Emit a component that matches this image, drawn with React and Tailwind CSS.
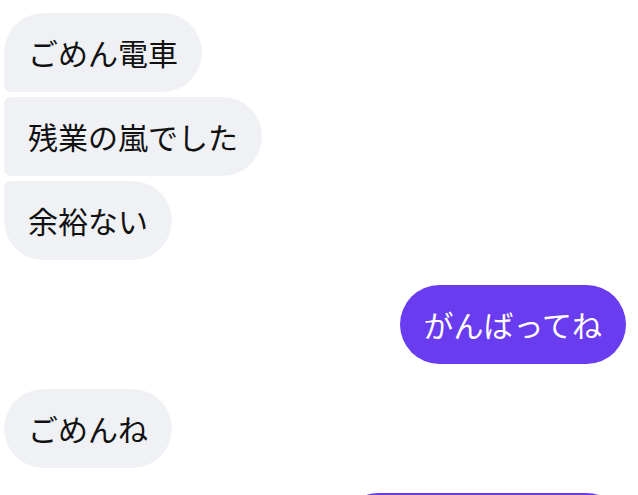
import React from 'react';

// One chat thread: incoming bubbles are grouped, outgoing ones sit on the right
const thread = [
  { from: 'them', lines: ['ごめん電車', '残業の嵐でした', '余裕ない'] },
  { from: 'me', lines: ['がんばってね'] },
  { from: 'them', lines: ['ごめんね'] },
  { from: 'me', lines: ['無理しないでね〜'] },
];

function radius(from, i, n) {
  // first bubble keeps its top corner round, last one its bottom corner
  if (n === 1) return 'rounded-[40px]';
  if (from === 'them') {
    if (i === 0) return 'rounded-[40px] rounded-bl-[7px]';
    if (i === n - 1) return 'rounded-[40px] rounded-tl-[7px]';
    return 'rounded-[40px] rounded-tl-[7px] rounded-bl-[7px]';
  }
  if (i === 0) return 'rounded-[40px] rounded-br-[7px]';
  if (i === n - 1) return 'rounded-[40px] rounded-tr-[7px]';
  return 'rounded-[40px] rounded-tr-[7px] rounded-br-[7px]';
}

export default function App() {
  return (
    <div
      className="w-[638px] h-[495px] overflow-hidden bg-white flex flex-col gap-[25px] pt-[13px] pl-[4px] pr-[12px]"
      style={{ fontFamily: '"Noto Sans CJK JP", "Noto Sans", sans-serif' }}
    >
      {thread.map((group, g) => (
        <div
          key={g}
          className={
            group.from === 'me'
              ? 'flex flex-col items-end gap-[5px] flex-shrink-0'
              : 'flex flex-col items-start gap-[5px] flex-shrink-0'
          }
        >
          {group.lines.map((line, i) => (
            <div
              key={i}
              className={
                (group.from === 'me'
                  ? 'bg-[#6a3cf0] text-white '
                  : 'bg-[#f0f1f5] text-[#111111] ') +
                'px-[24px] py-[24px] text-[30px] leading-[31px] whitespace-nowrap ' +
                radius(group.from, i, group.lines.length)
              }
            >
              {line}
            </div>
          ))}
        </div>
      ))}
    </div>
  );
}
